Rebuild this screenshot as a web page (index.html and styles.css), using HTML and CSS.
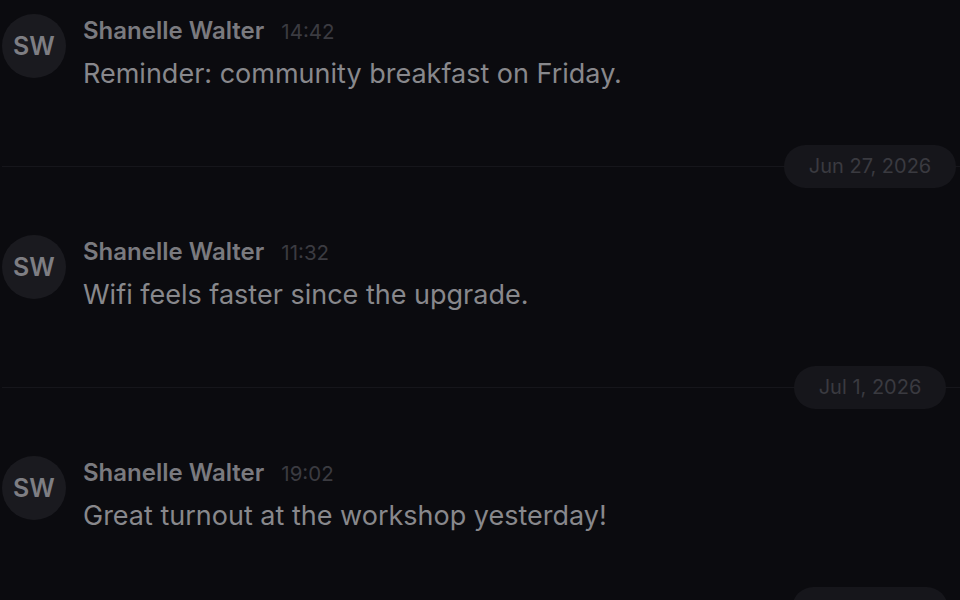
FILE: index.html
```html
<!DOCTYPE html>
<html>
<head>
<meta charset="utf-8">
<link rel="stylesheet" href="styles.css">
</head>
<body>
<div class="feed">
  <div class="msg">
    <div class="avatar">SW</div>
    <div class="body">
      <div class="meta"><span class="name">Shanelle Walter</span><span class="time">14:42</span></div>
      <div class="text">Reminder: community breakfast on Friday.</div>
    </div>
  </div>
  <div class="divider"><div class="slot"><span class="pill">Jun 27, 2026</span></div></div>
  <div class="msg">
    <div class="avatar">SW</div>
    <div class="body">
      <div class="meta"><span class="name">Shanelle Walter</span><span class="time">11:32</span></div>
      <div class="text">Wifi feels faster since the upgrade.</div>
    </div>
  </div>
  <div class="divider"><div class="slot"><span class="pill">Jul 1, 2026</span></div></div>
  <div class="msg">
    <div class="avatar">SW</div>
    <div class="body">
      <div class="meta"><span class="name">Shanelle Walter</span><span class="time">19:02</span></div>
      <div class="text">Great turnout at the workshop yesterday!</div>
    </div>
  </div>
  <div class="divider"><div class="slot"><span class="pill">Jul 3, 2026</span></div></div>
</div>
</body>
</html>
```
FILE: styles.css
```css
html, body {
  margin: 0;
  padding: 0;
  background: #0b0b0f;
  height: 100%;
  overflow: hidden;
}
body {
  font-family: Inter, "Liberation Sans", sans-serif;
  color: #88888c;
}
.feed {
  display: flex;
  flex-direction: column;
  padding: 14px 0 0 2px;
}
.msg {
  display: flex;
  gap: 17px;
  height: 130px;
}
.avatar {
  width: 64px;
  height: 64px;
  border-radius: 50%;
  background: #1a1a1f;
  display: flex;
  align-items: center;
  justify-content: center;
  font-size: 25px;
  font-weight: 600;
  color: #7e7e83;
  flex: none;
}
.body {
  display: flex;
  flex-direction: column;
  padding-top: 2px;
}
.meta {
  display: flex;
  align-items: baseline;
  gap: 17px;
  height: 32px;
}
.name {
  font-size: 24px;
  font-weight: 600;
  color: #7a7a7f;
}
.time {
  font-size: 20.5px;
  color: #3b3b41;
}
.text {
  margin-top: 9px;
  font-size: 27px;
  color: #88888c;
}
.divider {
  height: 44px;
  display: flex;
  justify-content: flex-end;
  align-items: center;
  background: linear-gradient(#16161b, #16161b) no-repeat 0 50% / 100% 1px;
  margin-bottom: 47px;
}
.slot {
  width: 180px;
  display: flex;
  justify-content: center;
}
.pill {
  background: #16161b;
  border-radius: 22px;
  height: 43px;
  padding: 0 25px;
  display: flex;
  align-items: center;
  font-size: 20px;
  color: #3a3a40;
}
```
